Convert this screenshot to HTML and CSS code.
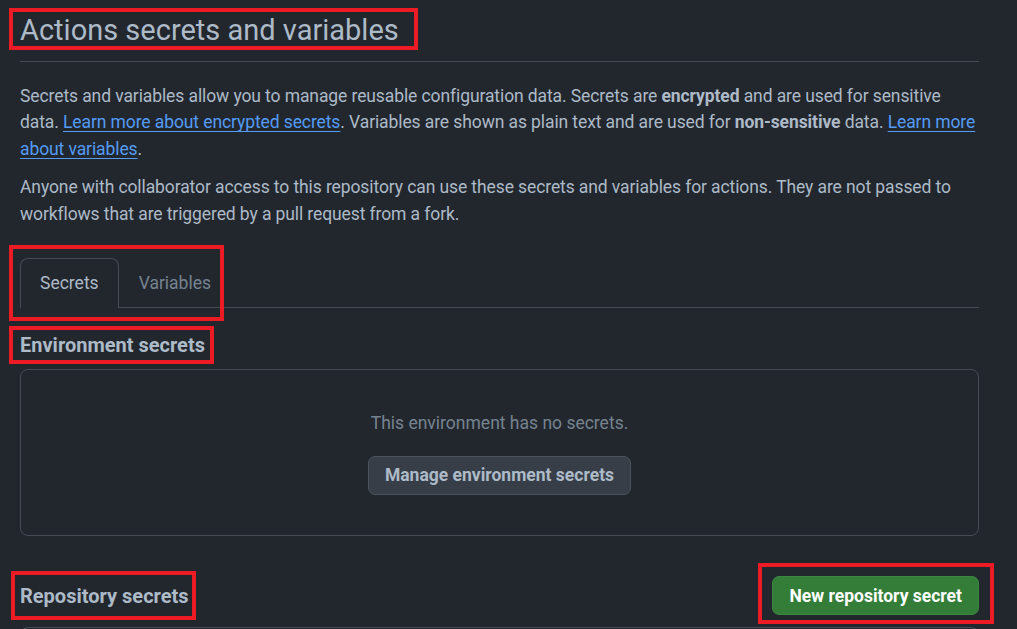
FILE: index.html
```html
<!DOCTYPE html>
<html lang="en">
<head>
<meta charset="utf-8">
<title>Actions secrets and variables</title>
<link rel="stylesheet" href="styles.css">
</head>
<body>
<main class="page">
  <div class="subhead">
    <h1 class="subhead-title">Actions secrets and variables</h1>
  </div>
  <p class="desc">Secrets and variables allow you to manage reusable configuration data. Secrets are <strong>encrypted</strong> and are used for sensitive data. <a href="#">Learn more about encrypted secrets</a>. Variables are shown as plain text and are used for <strong>non-sensitive</strong> data. <a href="#">Learn more about variables</a>.</p>
  <p class="desc second">Anyone with collaborator access to this repository can use these secrets and variables for actions. They are not passed to workflows that are triggered by a pull request from a fork.</p>

  <nav class="tabs">
    <a class="tab selected" href="#">Secrets</a>
    <a class="tab" href="#">Variables</a>
  </nav>

  <h2 class="section-title env">Environment secrets</h2>
  <div class="blankslate">
    <p class="blank-text">This environment has no secrets.</p>
    <button class="btn">Manage environment secrets</button>
  </div>

  <div class="repo-row">
    <h2 class="section-title">Repository secrets</h2>
    <button class="btn btn-primary">New repository secret</button>
  </div>
  <div class="repo-box"></div>

  <div class="mark m-title"></div>
  <div class="mark m-tabs"></div>
  <div class="mark m-env"></div>
  <div class="mark m-repo"></div>
  <div class="mark m-new"></div>
</main>
</body>
</html>
```
FILE: styles.css
```css
* { box-sizing: border-box; }
html, body {
  margin: 0;
  background: #22272e;
  height: 100%;
  overflow: hidden;
}
.page {
  position: relative;
  padding: 8px 38px 0 20px;
  color: #adbac7;
  font-family: Roboto, "Liberation Sans", Arial, sans-serif;
  font-size: 17.5px;
  line-height: 1.5;
}
.subhead {
  border-bottom: 1px solid #444c56;
  padding-bottom: 8px;
}
.subhead-title {
  margin: 0;
  font-size: 29px;
  font-weight: 400;
  line-height: 45px;
}
.desc {
  margin: 21px 0 0;
  letter-spacing: -0.1px;
}
.desc.second { margin-top: 12.5px; }
.desc strong { font-weight: 700; }
.desc a {
  color: #539bf5;
  text-decoration: underline;
  text-underline-offset: 3px;
}
.tabs {
  margin-top: 31px;
  display: flex;
  border-bottom: 1px solid #444c56;
}
.tab {
  display: block;
  padding: 11px 19px 11px;
  border: 1px solid transparent;
  border-bottom: 0;
  border-radius: 8px 8px 0 0;
  color: #768390;
  text-decoration: none;
  margin-bottom: -1px;
  line-height: 26px;
}
.tab.selected {
  color: #adbac7;
  border-color: #444c56;
  background: #22272e;
  padding-bottom: 12px;
}
.section-title {
  margin: 0;
  font-size: 20px;
  font-weight: 700;
  line-height: 30px;
}
.section-title.env { margin-top: 22px; }
.blankslate {
  margin-top: 9px;
  border: 1px solid #444c56;
  border-radius: 8px;
  padding: 40px;
  height: 167px;
  display: flex;
  flex-direction: column;
  align-items: center;
}
.blank-text {
  margin: 0 0 20px;
  color: #768390;
}
.btn {
  font-family: inherit;
  font-size: 17.5px;
  font-weight: 700;
  line-height: 26px;
  color: #adbac7;
  background: #373e47;
  border: 1px solid #4b535d;
  border-radius: 7px;
  padding: 5px 16px;
  height: 39px;
}
.btn-primary {
  background: #347d39;
  border-color: #3b8640;
  color: #ffffff;
}
.repo-row {
  margin-top: 40px;
  display: flex;
  justify-content: space-between;
  align-items: center;
  height: 40px;
}
.repo-box {
  margin-top: 11px;
  height: 40px;
  border: 1px solid #444c56;
  border-radius: 8px;
}
.mark {
  position: absolute;
  border: 4px solid #ed1c24;
  pointer-events: none;
}
.m-title { left: 9px; top: 8px; width: 409px; height: 42px; }
.m-tabs { left: 9px; top: 245px; width: 215px; height: 76px; }
.m-env { left: 9px; top: 326px; width: 205px; height: 38px; }
.m-repo { left: 11px; top: 571px; width: 185px; height: 49px; }
.m-new { left: 758px; top: 563px; width: 236px; height: 61px; }
```
